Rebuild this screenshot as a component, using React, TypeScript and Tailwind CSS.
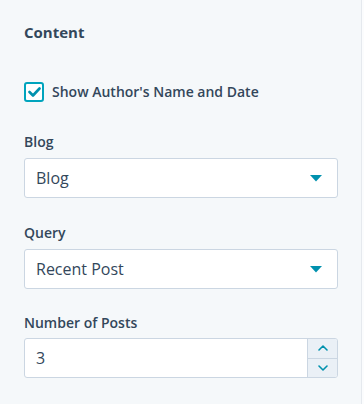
import { useState } from "react";

const Caret = () => (
  <svg width="12" height="7" viewBox="0 0 12 7" className="shrink-0">
    <path d="M0 0h12L6 6.5z" fill="#0091ae" />
  </svg>
);

const SelectField = ({ label, value }: { label: string; value: string }) => (
  <div className="flex flex-col">
    <label className="mb-[7px] text-[14px] font-semibold leading-[18px] text-[#33475b]">{label}</label>
    <div className="flex h-10 items-center justify-between rounded-[3px] border border-[#cbd6e2] bg-white pl-[11px] pr-[15px]">
      <span className="text-[16px] text-[#33475b]">{value}</span>
      <Caret />
    </div>
  </div>
);

export default function App() {
  const [checked, setChecked] = useState(true);

  return (
    <div className="flex h-[404px] w-[364px] bg-[#f5f8fa] font-['Open_Sans',sans-serif]">
      <div className="flex flex-1 flex-col pl-6 pr-[23px] pt-[21px]">
        <h2 className="text-[15px] font-bold leading-[22px] text-[#33475b]">Content</h2>

        <button
          onClick={() => setChecked(!checked)}
          className="mt-[38px] flex items-center gap-2 text-left"
        >
          <span className="flex h-5 w-5 items-center justify-center rounded-[3px] border-2 border-[#00a4bd] bg-white">
            {checked && (
              <svg width="13" height="10" viewBox="0 0 13 10">
                <path d="M1.5 5l3.5 3.5 6.5-7" fill="none" stroke="#0091ae" strokeWidth="2.6" strokeLinecap="round" strokeLinejoin="round" />
              </svg>
            )}
          </span>
          <span className="text-[14px] font-semibold text-[#33475b]">Show Author's Name and Date</span>
        </button>

        <div className="mt-[31px] flex flex-col gap-[26px]">
          <SelectField label="Blog" value="Blog" />
          <SelectField label="Query" value="Recent Post" />

          <div className="-mt-px flex flex-col">
            <label className="mb-[6px] text-[14px] font-semibold leading-[18px] text-[#33475b]">Number of Posts</label>
            <div className="flex h-10 overflow-hidden rounded-[3px] border border-[#cbd6e2] bg-white">
              <input
                defaultValue="3"
                className="min-w-0 flex-1 bg-transparent pl-[11px] text-[16px] text-[#33475b] outline-none"
              />
              <div className="flex w-[30px] flex-col border-l border-[#cbd6e2] bg-[#eaf0f6]">
                <button className="flex flex-1 items-center justify-center border-b border-[#cbd6e2]">
                  <svg width="10" height="6" viewBox="0 0 10 6">
                    <path d="M1 5l4-4 4 4" fill="none" stroke="#0091ae" strokeWidth="1.6" strokeLinecap="round" strokeLinejoin="round" />
                  </svg>
                </button>
                <button className="flex flex-1 items-center justify-center">
                  <svg width="10" height="6" viewBox="0 0 10 6">
                    <path d="M1 1l4 4 4-4" fill="none" stroke="#0091ae" strokeWidth="1.6" strokeLinecap="round" strokeLinejoin="round" />
                  </svg>
                </button>
              </div>
            </div>
          </div>
        </div>
      </div>
      <div className="w-[3px] border-l border-[#e5e9ee] bg-[#fbfcfd]" />
    </div>
  );
}
